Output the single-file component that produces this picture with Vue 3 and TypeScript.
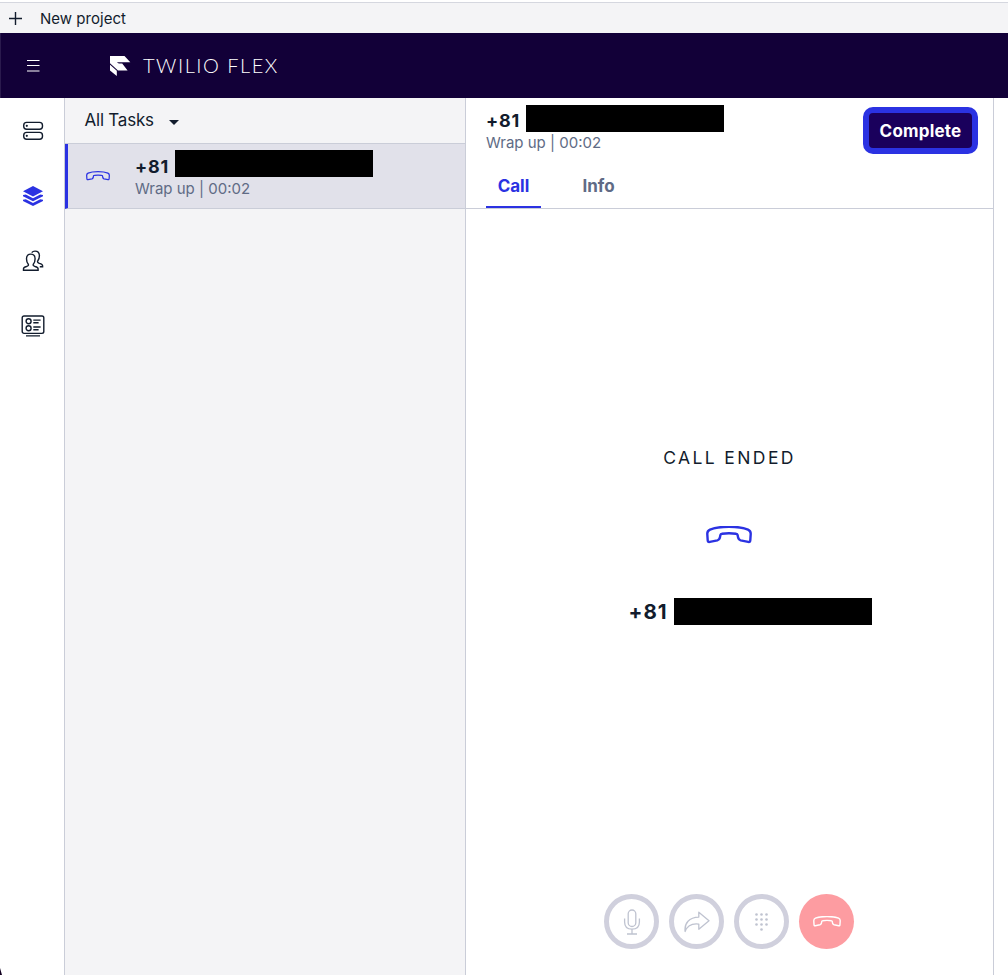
<script setup lang="ts">
interface CallAction {
  id: 'mute' | 'transfer' | 'keypad' | 'hangup'
  label: string
}

const status = 'Wrap up | 00:02'
const prefix = '+81'
const handset =
  'M1.3 8.2C1.1 5.7 1.5 4.8 4 3.6C13 -0.2 33 -0.2 42 3.6C44.5 4.8 44.9 5.7 44.7 8.2L44.3 14.2C44.2 15.8 43.6 16.2 42.2 15.9L34.6 14.4C33 14 32.6 13.4 32.2 11.9L31.6 8.9C31.4 8 31 7.8 30 7.7C25.5 7.1 20.5 7.1 16 7.7C15 7.8 14.6 8 14.4 8.9L13.8 11.9C13.4 13.4 13 14 11.4 14.4L3.8 15.9C2.4 16.2 1.8 15.8 1.7 14.2Z'

const actions: CallAction[] = [
  { id: 'mute', label: 'Mute' },
  { id: 'transfer', label: 'Transfer' },
  { id: 'keypad', label: 'Keypad' },
  { id: 'hangup', label: 'Hang up' },
]
const keys = [
  [1.5, 1.5], [6.5, 1.5], [11.5, 1.5],
  [1.5, 6.5], [6.5, 6.5], [11.5, 6.5],
  [1.5, 11.5], [6.5, 11.5], [11.5, 11.5],
  [6.5, 16.5],
]
</script>

<template>
  <div class="app">
    <div class="project-bar">
      <svg class="plus" width="13" height="13" viewBox="0 0 13 13"><path d="M6.5 0V13M0 6.5H13" /></svg>
      <span>New project</span>
    </div>

    <header class="header">
      <svg class="menu" width="13" height="12" viewBox="0 0 13 12"><path d="M0 .5H12.5M0 5.5H12.5M0 11H12.5" /></svg>
      <svg class="logo" width="21" height="20" viewBox="0 0 21 20">
        <path d="M0 0H14.5L20.3 6.3H6.8L8.8 7.6H12.2L17.6 14.5H8L0 7.2Z" />
        <path d="M0 8.7L6.8 14.7V20L0 14.4Z" />
      </svg>
      <span class="brand">TWILIO FLEX</span>
    </header>

    <div class="body">
      <nav class="rail">
        <a class="rail-item">
          <svg width="22" height="20" viewBox="0 0 22 20">
            <rect x="1.7" y="1.4" width="18.8" height="6.8" rx="3" />
            <rect x="1.7" y="11.4" width="18.8" height="6.8" rx="3" />
            <circle class="solid" cx="4.8" cy="4.8" r="1.1" />
            <circle class="solid" cx="4.8" cy="14.8" r="1.1" />
          </svg>
        </a>
        <a class="rail-item active">
          <svg width="22" height="22" viewBox="0 0 22 22">
            <path d="M11 1L21 6.2L11 11.5L1 6.2Z" />
            <path d="M1 10L3.8 9.6L11 13.3L18.2 9.6L21 10V11.3L11 16.3L1 11.3Z" />
            <path d="M1 14.7L3.8 14.2L11 18L18.2 14.2L21 14.7V16L11 21L1 16Z" />
          </svg>
        </a>
        <a class="rail-item">
          <svg width="22" height="22" viewBox="0 0 22 22">
            <path d="M1.5 20.3V18.8C1.5 17.5 2.5 17 4.5 16.5C6.2 16 6.7 15.4 6.3 14.3C5 12.8 4.5 11 4.5 8.8C4.5 5.7 6.2 4.1 8.8 4.1S13.1 5.7 13.1 8.8C13.1 11 12.6 12.8 11.3 14.3C10.9 15.4 11.4 16 13.1 16.5C15.1 17 16.1 17.5 16.1 18.8V20.3Z" />
            <path d="M9.7 2.6C10.5 1.6 11.6 1.1 13 1.1C15.8 1.1 17.4 2.9 17.4 5.8C17.4 8 16.9 9.6 15.7 11C15.3 12.2 15.8 12.8 17.4 13.3C19.5 13.9 20.6 14.5 20.6 15.8V16.8H17.8" />
          </svg>
        </a>
        <a class="rail-item cards">
          <svg width="24" height="22" viewBox="0 0 24 22">
            <rect x="1.2" y="1" width="21.6" height="17.4" rx="1.8" />
            <circle cx="7.6" cy="6.3" r="2.5" />
            <circle cx="7.6" cy="13.3" r="2.5" />
            <path d="M12.3 5.1H19.6M12.3 7.8H17.6M12.3 12H19.6M12.3 14.7H17.6M5 20.9H19" />
          </svg>
        </a>
      </nav>

      <section class="tasks">
        <div class="filter">
          <span>All Tasks</span>
          <svg width="10" height="5" viewBox="0 0 10 5"><path d="M0 0H10L5 5Z" /></svg>
        </div>
        <article class="task">
          <svg class="phone" width="24" height="10" viewBox="0 0 46 18"><path :d="handset" /></svg>
          <div class="details">
            <div class="caller"><b>{{ prefix }}</b><i class="redacted"></i></div>
            <div class="status">{{ status }}</div>
          </div>
        </article>
      </section>

      <main class="panel">
        <div class="panel-head">
          <div class="details">
            <div class="caller"><b>{{ prefix }}</b><i class="redacted"></i></div>
            <div class="status">{{ status }}</div>
          </div>
          <button class="complete">Complete</button>
        </div>
        <div class="tabs">
          <span class="tab selected">Call</span>
          <span class="tab">Info</span>
        </div>
        <div class="call">
          <div class="ended">CALL ENDED</div>
          <svg class="phone big" width="46" height="18" viewBox="0 0 46 18"><path :d="handset" /></svg>
          <div class="number"><b>{{ prefix }}</b><i class="redacted"></i></div>
          <div class="actions">
            <button v-for="a in actions" :key="a.id" class="action" :class="a.id" :aria-label="a.label">
              <svg v-if="a.id === 'mute'" width="18" height="26" viewBox="0 0 18 26">
                <rect x="5.2" y="1" width="7.6" height="16.5" rx="3.8" />
                <path d="M1.6 9.5V13C1.6 17.5 4.5 20.2 9 20.2S16.4 17.5 16.4 13V9.5M9 20.2V25M4 25H14" />
              </svg>
              <svg v-else-if="a.id === 'transfer'" width="26" height="22" viewBox="0 0 26 22">
                <path d="M14.8 1.2L25 9.7L14.8 18.2V13.1C7.5 12.2 3.2 15 1.1 20.5C.2 12 5.2 6.3 14.8 6.1Z" />
              </svg>
              <svg v-else-if="a.id === 'keypad'" class="dots" width="13" height="18" viewBox="0 0 13 18">
                <circle v-for="(k, i) in keys" :key="i" :cx="k[0]" :cy="k[1]" r="1.3" />
              </svg>
              <svg v-else width="28" height="11" viewBox="0 0 46 18"><path :d="handset" /></svg>
            </button>
          </div>
        </div>
      </main>
    </div>
  </div>
</template>

<style>
body {
  margin: 0;
  background: #fff;
}
</style>

<style scoped>
.app {
  position: relative;
  display: flex;
  flex-direction: column;
  box-sizing: border-box;
  height: 975px;
  padding-top: 2px;
  overflow: hidden;
  color: #121c2d;
  font-family: Inter, "Liberation Sans", sans-serif;
}
/* window corner */
.app::after {
  content: "";
  position: absolute;
  left: 0;
  bottom: 0;
  width: 2px;
  height: 7px;
  background: #120020;
  clip-path: polygon(0 0, 100% 100%, 0 100%);
}
svg {
  display: block;
  flex: none;
}
button {
  font: inherit;
  padding: 0;
}
.project-bar {
  box-sizing: border-box;
  height: 31px;
  flex: none;
  display: flex;
  align-items: center;
  gap: 18.5px;
  padding-left: 8.5px;
  border-top: 1px solid #d5d7df;
  background: #f4f4f6;
  font-size: 15px;
  letter-spacing: .02px;
}
.plus {
  fill: none;
  stroke: #121c2d;
  stroke-width: 1.4;
}
.header {
  height: 65px;
  flex: none;
  display: flex;
  align-items: center;
  border-left: 1px solid #2a1a4d;
  background: #120038;
  color: #fff;
}
.menu {
  margin-left: 26px;
  fill: none;
  stroke: #fff;
  stroke-width: 1.2;
}
.logo {
  margin-left: 70px;
  fill: #fff;
}
.brand {
  margin: -2px 0 0 12px;
  font: 300 20px/24px Lato, sans-serif;
  letter-spacing: 1.5px;
}
.body {
  flex: 1;
  display: flex;
  min-height: 0;
}
.rail {
  width: 64px;
  flex: none;
  border-right: 1px solid #cacdd8;
}
.rail-item {
  height: 65px;
  display: flex;
  align-items: center;
  justify-content: center;
  padding-left: 2px;
}
.rail-item.cards {
  height: 66px;
}
.rail-item svg {
  fill: none;
  stroke: #121c2d;
  stroke-width: 1.4;
}
.rail-item .solid {
  fill: #121c2d;
  stroke: none;
}
.rail-item.active svg {
  fill: #2b32e2;
  stroke: none;
}
.tasks {
  width: 400px;
  flex: none;
  border-right: 1px solid #cacdd8;
  background: #f4f4f6;
}
.filter {
  height: 45px;
  display: flex;
  align-items: center;
  gap: 15.5px;
  padding-left: 19.5px;
  border-bottom: 1px solid #cacdd8;
  font-size: 17px;
  letter-spacing: -.22px;
}
.filter span {
  margin-top: -2px;
}
.filter svg {
  margin-top: 3px;
  fill: #121c2d;
}
.task {
  height: 64px;
  display: flex;
  border-left: 3px solid #2b32e2;
  border-bottom: 1px solid #cacdd8;
  background: #e1e1ea;
}
.phone {
  fill: none;
  stroke: #2b32e2;
  stroke-width: 2.4;
  stroke-linejoin: round;
}
.task .phone {
  margin: 27px 25px 0 18px;
}
.task .details {
  margin-top: 6px;
}
.task .status {
  padding-top: 1px;
}
.caller,
.number {
  display: flex;
  align-items: center;
}
.caller {
  height: 27px;
  gap: 5px;
}
.caller b {
  width: 35px;
  font-size: 18px;
  letter-spacing: .8px;
  margin-top: 4px;
}
.task .caller b {
  margin-top: 6px;
}
.redacted {
  width: 198px;
  height: 27px;
  background: #000;
}
.status {
  color: #606b85;
  font-size: 15px;
  line-height: 22px;
}
.panel {
  width: 527px;
  flex: none;
  display: flex;
  flex-direction: column;
  border-right: 1px solid #cacdd8;
}
.panel-head {
  height: 68px;
  display: flex;
  align-items: flex-start;
  justify-content: space-between;
  padding: 0 15px 0 20px;
}
.panel-head .details {
  margin-top: 7px;
}
.complete {
  box-sizing: border-box;
  width: 115px;
  height: 47px;
  margin-top: 9px;
  border: 6px solid #2b32e2;
  border-radius: 10px;
  background: #1a005c;
  color: #fff;
  font-size: 17px;
  font-weight: 700;
  letter-spacing: .2px;
}
.tabs {
  height: 42px;
  flex: none;
  display: flex;
  gap: 30px;
  padding-left: 20px;
  border-bottom: 1px solid #cacdd8;
  color: #606b85;
  font-size: 17px;
  font-weight: 700;
}
.tab {
  box-sizing: border-box;
  width: 55px;
  height: 42px;
  line-height: 40px;
  text-align: center;
}
.tab.selected {
  border-bottom: 2px solid #2b32e2;
  color: #2b32e2;
}
.call {
  flex: 1;
  display: flex;
  flex-direction: column;
  align-items: center;
  padding-right: 2px;
}
.ended {
  margin-top: 237px;
  padding-left: 2px;
  font-size: 17.5px;
  line-height: 24px;
  letter-spacing: 2.4px;
}
.phone.big {
  margin-top: 56px;
}
.number {
  margin: 54px 0 0 43px;
}
.number b {
  width: 45px;
  font-size: 20.5px;
  letter-spacing: 1px;
}
.actions {
  display: flex;
  gap: 10px;
  margin: auto 0 26px;
}
.action {
  box-sizing: border-box;
  width: 55px;
  height: 55px;
  display: flex;
  align-items: center;
  justify-content: center;
  border: 5px solid #d0d0dd;
  border-radius: 50%;
  background: #fff;
}
.action svg {
  margin-left: 1px;
  fill: none;
  stroke: #bfc3d0;
  stroke-width: 1.3;
  stroke-linejoin: round;
}
.action .dots {
  fill: #bfc3d0;
  stroke: none;
}
.action.hangup {
  border: 0;
  background: #fd9ca1;
}
.action.hangup svg {
  stroke: #fff;
  stroke-width: 2.3;
}
</style>
